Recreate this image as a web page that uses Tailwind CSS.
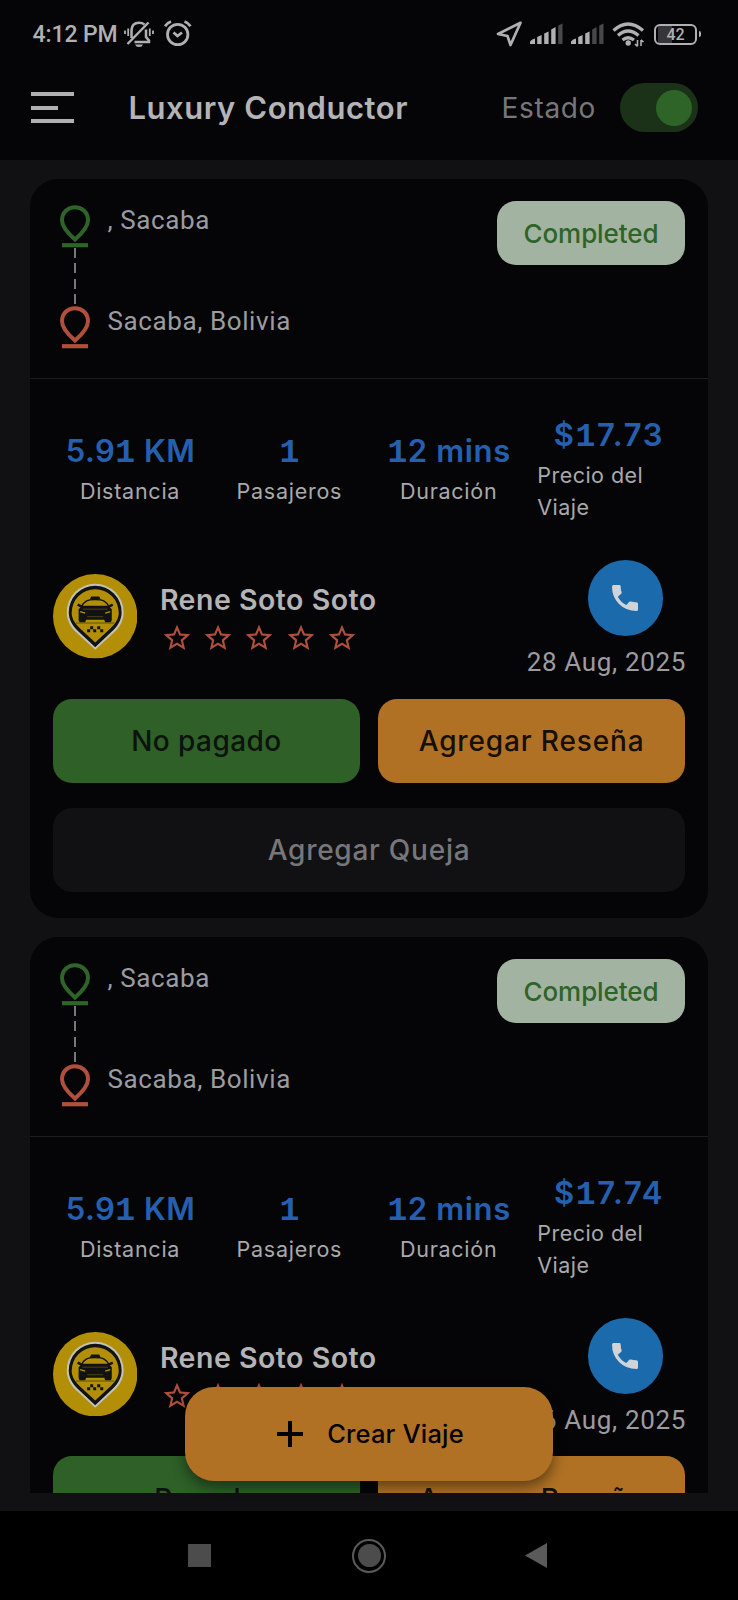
<!DOCTYPE html>
<html lang="es">
<head>
<meta charset="utf-8">
<title>Luxury Conductor</title>
<script src="https://cdn.jsdelivr.net/npm/@tailwindcss/browser@4"></script>
</head>
<body class="bg-[#111113] font-['Inter',sans-serif]">
<svg class="hidden">
  <symbol id="pin" viewBox="0 0 30 43"><path d="M15 2.2C8 2.2 2 7.4 2 15.2C2 21.6 7.6 28 15 34.6C22.4 28 28 21.6 28 15.2C28 7.4 22 2.2 15 2.2Z" fill="none" stroke="currentColor" stroke-width="4"/><path d="M2 38.1h26v4.200H2z" fill="currentColor"/></symbol>
  <symbol id="star" viewBox="0 0 24 24"><path fill="currentColor" d="M22 9.24l-7.19-.62L12 2 9.19 8.63 2 9.24l5.46 4.73L5.82 21 12 17.27 18.18 21l-1.63-7.03L22 9.24zM12 15.4l-3.76 2.27 1-4.28-3.32-2.88 4.38-.38L12 6.1l1.71 4.04 4.38.38-3.32 2.88 1 4.28L12 15.4z"/></symbol>
  <symbol id="phone" viewBox="0 0 26 26"><path fill="currentColor" d="M1.6 0H7.3Q8.7 0 8.7 1.4Q8.7 5 9.6 7.1Q9.9 8 9.3 8.7L5.8 11.7Q8.7 17.2 14.3 20.1L17.3 16.8Q18 16.200 18.900 16.600Q21 17.300 24.500 17.300Q26 17.300 26 18.800V24.500Q26 26 24.500 26Q14 26 7 19Q0 12 0 1.500Q0 0 1.600 0Z"/></symbol>
  <symbol id="avatar" viewBox="0 0 84 84">
    <circle cx="42" cy="42" r="42" fill="#b38f07"/>
    <path d="M42 75.300L22.500 57.500C17 52 13.700 45.500 13.700 38A28.300 28.300 0 0 1 70.300 38C70.300 45.500 67 52 61.500 57.500Z" fill="#c4c3b8"/>
    <path d="M42 72.800L24.300 56.200C19 51 15.700 45 15.700 38A26.300 26.300 0 0 1 68.300 38C68.300 45 65 51 59.700 56.200Z" fill="#101214"/>
    <path d="M42 68.300L26.700 54C22 49.500 18.600 44.500 18.600 38.500A23.400 23.400 0 0 1 65.400 38.500C65.400 44.500 62 49.500 57.300 54Z" fill="#b38f07"/>
    <g fill="#101214">
      <path d="M36.500 25.500L38 22.500H46L47.500 25.500Z"/>
      <path d="M28 33C31 27 34 25.500 42 25.500S53 27 56 33" fill="none" stroke="#101214" stroke-width="1.500"/>
      <path d="M29 31.500H55L58.500 35V46L57.500 48H52L51 45.500H33L32 48H26.500L25.500 46V35Z"/>
      <path d="M24.500 30.500L28.500 32.500M59.500 30.500L55.500 32.500" stroke="#101214" stroke-width="2.500"/>
      <path d="M23 48.400H61V49H23z"/>
      <path d="M37 52h3v3h-3zM44 52h3v3h-3zM34 55h3v3h-3zM40 55h3v3h-3zM47 55h3v3h-3z"/>
    </g>
    <path d="M29.500 35H54.500M34 42.500H50" stroke="#5e4e0c" stroke-width=".8"/>
    <path d="M27 37.500L32 39M57 37.500L52 39" stroke="#b38f07" stroke-width="1.400"/>
  </symbol>
</svg>

<div class="flex h-[1600px] w-[738px] flex-col overflow-hidden">
  <header class="h-[160px] shrink-0 bg-[#050507]">
    <!-- Status bar -->
    <div class="flex h-[68px] items-center pr-[37px] pl-[32.500px] text-[#b0b0b2]">
      <span class="w-[91px] pt-[1px] font-['Roboto'] text-[23px] leading-[68px] font-medium tracking-[-0.100px] whitespace-nowrap">4:12 PM</span>
      <svg class="h-[28px] w-[30px]" viewBox="0 0 30 28" fill="none" stroke="currentColor" stroke-width="2.500"><path d="M24.500 2.500L3.500 24M7.500 18V11.500C7.500 5 10.500 2.800 15 2.800C17 2.800 19 3.300 20.500 4.500M22 9.500V17L25 20.500V22H10.500"/><path d="M11 24.500h8q-1 2.500-4 2.500t-4-2.500z" fill="currentColor" stroke="none"/><path d="M1 10.500v3.500M4.200 8.500v7.500M25.800 8.500v7.500M29 10.500v3.500" stroke-width="1.800"/></svg>
      <svg class="ml-[10px] h-[28px] w-[28px]" viewBox="0 0 28 28" fill="none" stroke="currentColor" stroke-width="2.800"><circle cx="13.700" cy="14.500" r="10.200"/><path d="M9.500 12.500L13.500 16L18 12.500M1 6.200Q3 3 7 1.500M26.500 6.200Q24.500 3 20.500 1.500"/></svg>
      <div class="ml-auto flex items-center">
        <svg class="h-[26px] w-[27px]" viewBox="0 0 27 26" fill="none" stroke="currentColor" stroke-width="2.700" stroke-linejoin="round"><path d="M24.500 1.800L2 13L11.500 15L14.500 24Z"/></svg>
        <svg class="ml-[7px] h-[22px] w-[33px]" viewBox="0 0 33 22" fill="currentColor"><path d="M0 18.500Q2 16 5 15.500V21H0zM7.200 14l4.400-2V21H7.200zM14.200 10.500l4.400-2V21h-4.400zM21.200 6.500l4.400-2.500V21h-4.400z"/><path fill="#48484a" d="M28.200 2.500l4.300-2V21h-4.300z"/></svg>
        <svg class="ml-[8px] h-[22px] w-[33px]" viewBox="0 0 33 22" fill="currentColor"><path d="M0 18.500Q2 16 5 15.500V21H0zM7.200 14l4.400-2V21H7.200zM14.200 10.500l4.400-2V21h-4.400z"/><path fill="#48484a" d="M21.200 6.500l4.400-2.500V21h-4.400zM28.200 2.500l4.300-2V21h-4.300z"/></svg>
        <svg class="ml-[8px] h-[25px] w-[33px]" viewBox="0 0 33 25" fill="none" stroke="currentColor" stroke-width="3.300"><path d="M1.500 8.500Q16 -4.500 31 8.500M6 13.500Q16 4.500 26.500 13.500M10.500 18Q16 13.500 22 18"/><circle cx="16.200" cy="21" r="2.700" fill="currentColor" stroke="none"/><path d="M25.500 18v6M29 24v-6M23 22l2.500 2.500M31.500 20L29 17.800" stroke-width="1.600"/></svg>
        <div class="ml-[9px] flex h-[21px] w-[43px] items-center justify-center rounded-[6px] border-[2.500px] border-[#b0b0b2] bg-[linear-gradient(90deg,transparent_2px,#363638_2px,#363638_16px,transparent_16px)] pt-[2px] font-['Roboto'] text-[16px] leading-none font-medium">42</div>
        <div class="ml-[2px] h-[6px] w-[2px] rounded-r bg-[#b0b0b2]"></div>
      </div>
    </div>
    <!-- App bar -->
    <div class="flex h-[79px] items-center pr-[40px] pl-[31px]">
      <div class="flex flex-col gap-[9.500px]">
        <div class="h-[4px] w-[43px] bg-[#b0b0b2]"></div>
        <div class="h-[4px] w-[27px] bg-[#b0b0b2]"></div>
        <div class="h-[4px] w-[43px] bg-[#b0b0b2]"></div>
      </div>
      <h1 class="mt-[1px] ml-[54.500px] text-[31px] leading-[40px] font-semibold tracking-[0.540px] text-[#b4b4b6]">Luxury Conductor</h1>
      <span class="mt-[1px] ml-auto text-[28px] leading-[40px] tracking-[0.650px] text-[#77777b]">Estado</span>
      <div class="ml-[24px] flex h-[49px] w-[78px] items-center justify-end rounded-full bg-[#1b3118] pr-[6px]"><div class="size-[36px] rounded-full bg-[#2e6428]"></div></div>
    </div>
  </header>

  <main class="flex h-[1333px] shrink-0 flex-col gap-[19.400px] overflow-hidden px-[30px] pt-[19.300px]">
    <article class="h-[738.400px] shrink-0 rounded-[28px] bg-[#050507]">
      <div class="flex h-[200px] border-b-[1.500px] border-[#1c1c1e] pt-[21.700px] pr-[23px] pl-[30px]">
        <div class="flex w-[30px] flex-col items-center pt-[4px]">
          <svg class="h-[43px] w-[30px] text-[#2e6428]"><use href="#pin"/></svg>
          <div class="h-[58px] w-[2.500px] bg-[repeating-linear-gradient(180deg,#77777b_0_10px,transparent_10px_15.400px)]"></div>
          <svg class="h-[43px] w-[30px] text-[#b04f3c]"><use href="#pin"/></svg>
        </div>
        <div class="ml-[17.500px] flex flex-col gap-[62.400px] font-['Roboto'] text-[26px] leading-[39px] tracking-[0.600px] text-[#9c9ca0]">
          <p>, Sacaba</p>
          <p>Sacaba, Bolivia</p>
        </div>
        <div class="ml-auto h-[64px] w-[188px] rounded-[19px] bg-[#a3b3a1] text-center text-[26px] leading-[65px] font-medium tracking-[-0.080px] text-[#2e6428]">Completed</div>
      </div>
      <div class="grid h-[178.700px] grid-cols-4 items-center px-[20.400px] pt-[1px] text-[21.500px] leading-[32px] tracking-[0.750px] text-[#a9a9ab]">
        <div class="flex flex-col items-center gap-[4px]"><b class="pl-[1px] text-[31px] leading-[40px] font-semibold tracking-[0.500px] text-[#2560b0]">5.9<i class="font-['Liberation_Mono'] text-[33px] leading-none font-bold not-italic">1</i> KM</b><span>Distancia</span></div>
        <div class="flex flex-col items-center gap-[4px]"><b class="pl-[1px] text-[31px] leading-[40px] font-semibold text-[#2560b0]"><i class="font-['Liberation_Mono'] text-[33px] leading-none font-bold not-italic">1</i></b><span>Pasajeros</span></div>
        <div class="flex flex-col items-center gap-[4px]"><b class="pl-[1px] text-[31px] leading-[40px] font-semibold tracking-[0.650px] text-[#2560b0]"><i class="font-['Liberation_Mono'] text-[33px] leading-none font-bold not-italic">1</i>2 mins</b><span>Duración</span></div>
        <div class="flex flex-col items-center gap-[4px] px-[9px]"><b class="pl-[2px] text-[31px] leading-[40px] font-semibold tracking-[1.700px] text-[#2560b0]">$<i class="font-['Liberation_Mono'] text-[33px] leading-none font-bold not-italic">1</i>7.73</b><span class="w-full tracking-[0.450px]">Precio del<br>Viaje</span></div>
      </div>
      <div class="flex h-[140.700px] items-start px-[23px]">
        <svg class="mt-[16.300px] size-[84.400px]"><use href="#avatar"/></svg>
        <div class="mt-[24.500px] ml-[22.500px] text-[28.500px] leading-[36px] font-semibold tracking-[0.500px] text-[#b4b4b6]">
          <p>Rene Soto Soto</p>
          <div class="mt-[4px] ml-[0.700px] flex gap-[9.400px] text-[#b04f3c]">
            <svg class="size-8"><use href="#star"/></svg><svg class="size-8"><use href="#star"/></svg><svg class="size-8"><use href="#star"/></svg><svg class="size-8"><use href="#star"/></svg><svg class="size-8"><use href="#star"/></svg>
          </div>
        </div>
        <div class="mt-[2.500px] ml-auto flex flex-col items-end">
          <div class="mr-[22px] flex size-[75.300px] items-center justify-center rounded-full bg-[#1a6aac] text-[#d0d3d7]"><svg class="size-[26px]"><use href="#phone"/></svg></div>
          <span class="-mr-[1px] mt-[8px] font-['Roboto'] text-[26px] leading-[36px] tracking-[0.650px] text-[#9c9ca0]">28 Aug, 2025</span>
        </div>
      </div>
      <div class="grid grid-cols-2 gap-x-[18.300px] gap-y-[24.700px] px-[23px] text-center text-[28px] leading-[85px] font-medium">
        <button class="h-[84.300px] rounded-[19px] bg-[#2e6028] tracking-[0.450px] text-[#0c130c]">No pagado</button>
        <button class="h-[84.300px] rounded-[19px] bg-[#b07124] tracking-[0.860px] text-[#150f07]">Agregar Reseña</button>
        <button class="col-span-2 h-[84.300px] rounded-[19px] bg-[#111113] tracking-[0.740px] text-[#77777b]">Agregar Queja</button>
      </div>
    </article>

    <article class="h-[738.400px] shrink-0 rounded-[28px] bg-[#050507]">
      <div class="flex h-[200px] border-b-[1.500px] border-[#1c1c1e] pt-[21.700px] pr-[23px] pl-[30px]">
        <div class="flex w-[30px] flex-col items-center pt-[4px]">
          <svg class="h-[43px] w-[30px] text-[#2e6428]"><use href="#pin"/></svg>
          <div class="h-[58px] w-[2.500px] bg-[repeating-linear-gradient(180deg,#77777b_0_10px,transparent_10px_15.400px)]"></div>
          <svg class="h-[43px] w-[30px] text-[#b04f3c]"><use href="#pin"/></svg>
        </div>
        <div class="ml-[17.500px] flex flex-col gap-[62.400px] font-['Roboto'] text-[26px] leading-[39px] tracking-[0.600px] text-[#9c9ca0]">
          <p>, Sacaba</p>
          <p>Sacaba, Bolivia</p>
        </div>
        <div class="ml-auto h-[64px] w-[188px] rounded-[19px] bg-[#a3b3a1] text-center text-[26px] leading-[65px] font-medium tracking-[-0.080px] text-[#2e6428]">Completed</div>
      </div>
      <div class="grid h-[178.700px] grid-cols-4 items-center px-[20.400px] pt-[1px] text-[21.500px] leading-[32px] tracking-[0.750px] text-[#a9a9ab]">
        <div class="flex flex-col items-center gap-[4px]"><b class="pl-[1px] text-[31px] leading-[40px] font-semibold tracking-[0.500px] text-[#2560b0]">5.9<i class="font-['Liberation_Mono'] text-[33px] leading-none font-bold not-italic">1</i> KM</b><span>Distancia</span></div>
        <div class="flex flex-col items-center gap-[4px]"><b class="pl-[1px] text-[31px] leading-[40px] font-semibold text-[#2560b0]"><i class="font-['Liberation_Mono'] text-[33px] leading-none font-bold not-italic">1</i></b><span>Pasajeros</span></div>
        <div class="flex flex-col items-center gap-[4px]"><b class="pl-[1px] text-[31px] leading-[40px] font-semibold tracking-[0.650px] text-[#2560b0]"><i class="font-['Liberation_Mono'] text-[33px] leading-none font-bold not-italic">1</i>2 mins</b><span>Duración</span></div>
        <div class="flex flex-col items-center gap-[4px] px-[9px]"><b class="pl-[2px] text-[31px] leading-[40px] font-semibold tracking-[1.700px] text-[#2560b0]">$<i class="font-['Liberation_Mono'] text-[33px] leading-none font-bold not-italic">1</i>7.74</b><span class="w-full tracking-[0.450px]">Precio del<br>Viaje</span></div>
      </div>
      <div class="flex h-[140.700px] items-start px-[23px]">
        <svg class="mt-[16.300px] size-[84.400px]"><use href="#avatar"/></svg>
        <div class="mt-[24.500px] ml-[22.500px] text-[28.500px] leading-[36px] font-semibold tracking-[0.500px] text-[#b4b4b6]">
          <p>Rene Soto Soto</p>
          <div class="mt-[4px] ml-[0.700px] flex gap-[9.400px] text-[#b04f3c]">
            <svg class="size-8"><use href="#star"/></svg><svg class="size-8"><use href="#star"/></svg><svg class="size-8"><use href="#star"/></svg><svg class="size-8"><use href="#star"/></svg><svg class="size-8"><use href="#star"/></svg>
          </div>
        </div>
        <div class="mt-[2.500px] ml-auto flex flex-col items-end">
          <div class="mr-[22px] flex size-[75.300px] items-center justify-center rounded-full bg-[#1a6aac] text-[#d0d3d7]"><svg class="size-[26px]"><use href="#phone"/></svg></div>
          <span class="-mr-[1px] mt-[8px] font-['Roboto'] text-[26px] leading-[36px] tracking-[0.650px] text-[#9c9ca0]">26 Aug, 2025</span>
        </div>
      </div>
      <div class="grid grid-cols-2 gap-x-[18.300px] px-[23px] text-center text-[28px] leading-[87px] font-medium">
        <button class="h-[84.300px] rounded-[19px] bg-[#2e6028] tracking-[0.550px] text-[#0c130c]">Pagado</button>
        <button class="h-[84.300px] rounded-[19px] bg-[#b07124] tracking-[0.860px] text-[#150f07]">Agregar Reseña</button>
      </div>
    </article>
  </main>

  <!-- System navigation -->
  <nav class="mt-[18px] flex h-[89px] shrink-0 items-center bg-black pl-[188px]">
    <div class="size-[23px] bg-[#4c4c4c]"></div>
    <div class="ml-[141px] flex size-[34px] items-center justify-center rounded-full border-[2.500px] border-[#5a5a5a]"><div class="size-[23px] rounded-full bg-[#4c4c4c]"></div></div>
    <svg class="ml-[139px] h-[25px] w-[22px]" viewBox="0 0 22 25"><path d="M0 12.500L22 0V25Z" fill="#5a5a5a"/></svg>
  </nav>
</div>

<!-- Floating action button -->
<button class="absolute top-[1387px] left-[184.700px] flex h-[94px] w-[368.600px] items-center rounded-[29px] bg-[#b07124] pl-[92px] text-black shadow-[0_6px_14px_rgba(0,0,0,0.450)]">
  <svg class="size-[26px]" viewBox="0 0 26 26"><path d="M13 0V26M0 13H26" stroke="#000" stroke-width="4"/></svg>
  <span class="ml-[24.500px] text-[25.500px] leading-[40px] font-medium tracking-[0.160px] whitespace-nowrap">Crear Viaje</span>
</button>
</body>
</html>
